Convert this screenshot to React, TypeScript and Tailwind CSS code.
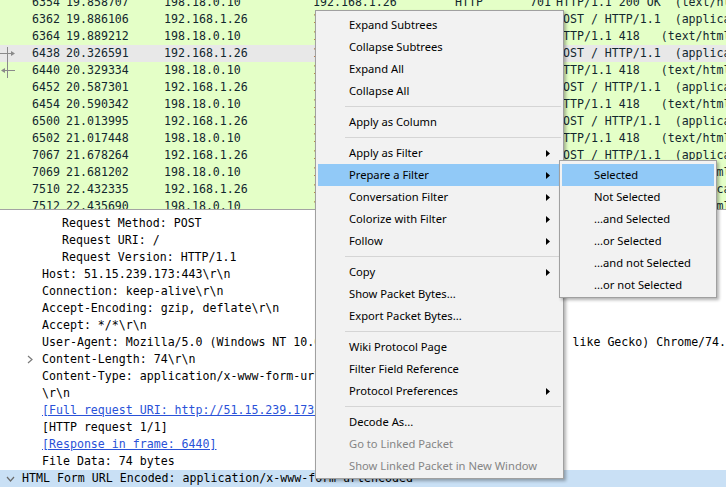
import React from "react";

const mono = { fontFamily: '"DejaVu Sans Mono", monospace' };
const ui = { fontFamily: '"Noto Sans", sans-serif' };

type Pkt = [string, string, string, string, string, string, string];

const packets: Pkt[] = [
  ["6354", "19.858707", "198.18.0.10", "192.168.1.26", "HTTP", "701", "HTTP/1.1 200 OK  (text/html)"],
  ["6362", "19.886106", "192.168.1.26", "198.18.0.10", "HTTP", "579", "POST / HTTP/1.1  (application/x-www-form-urlencoded)"],
  ["6364", "19.889212", "198.18.0.10", "192.168.1.26", "HTTP", "418", "HTTP/1.1 418   (text/html)"],
  ["6438", "20.326591", "192.168.1.26", "198.18.0.10", "HTTP", "579", "POST / HTTP/1.1  (application/x-www-form-urlencoded)"],
  ["6440", "20.329334", "198.18.0.10", "192.168.1.26", "HTTP", "418", "HTTP/1.1 418   (text/html)"],
  ["6452", "20.587301", "192.168.1.26", "198.18.0.10", "HTTP", "579", "POST / HTTP/1.1  (application/x-www-form-urlencoded)"],
  ["6454", "20.590342", "198.18.0.10", "192.168.1.26", "HTTP", "418", "HTTP/1.1 418   (text/html)"],
  ["6500", "21.013995", "192.168.1.26", "198.18.0.10", "HTTP", "579", "POST / HTTP/1.1  (application/x-www-form-urlencoded)"],
  ["6502", "21.017448", "198.18.0.10", "192.168.1.26", "HTTP", "418", "HTTP/1.1 418   (text/html)"],
  ["7067", "21.678264", "192.168.1.26", "198.18.0.10", "HTTP", "579", "POST / HTTP/1.1  (application/x-www-form-urlencoded)"],
  ["7069", "21.681202", "198.18.0.10", "192.168.1.26", "HTTP", "418", "HTTP/1.1 418   (text/html)"],
  ["7510", "22.432335", "192.168.1.26", "198.18.0.10", "HTTP", "579", "POST / HTTP/1.1  (application/x-www-form-urlencoded)"],
  ["7512", "22.435690", "198.18.0.10", "192.168.1.26", "HTTP", "418", "HTTP/1.1 418   (text/html)"],
];

function Gutter({ kind }: { kind: "req" | "resp" | null }) {
  return (
    <div className="w-[16px] h-[17px] shrink-0">
      {kind === "req" && (
        <svg width="16" height="17" viewBox="0 0 16 17">
          <line x1="7.5" y1="2" x2="7.5" y2="17" stroke="#8a8a8a" strokeWidth="1" />
          <line x1="0" y1="8.5" x2="14" y2="8.5" stroke="#8a8a8a" strokeWidth="1" />
          <path d="M11 6 L15 8.5 L11 11 Z" fill="#8a8a8a" />
        </svg>
      )}
      {kind === "resp" && (
        <svg width="16" height="17" viewBox="0 0 16 17">
          <line x1="7.5" y1="0" x2="7.5" y2="16" stroke="#8a8a8a" strokeWidth="1" />
          <line x1="2" y1="8.5" x2="15" y2="8.5" stroke="#8a8a8a" strokeWidth="1" />
          <path d="M5 6 L1 8.5 L5 11 Z" fill="#8a8a8a" />
        </svg>
      )}
    </div>
  );
}

function PacketRow({ p, i }: { p: Pkt; i: number }) {
  const selected = i === 3;
  return (
    <div
      className={`flex h-[17px] leading-[17px] whitespace-pre text-[#12272e] ${selected ? "bg-[#e8e8e8]" : "bg-[#e4ffc7]"}`}
    >
      <Gutter kind={i === 3 ? "req" : i === 4 ? "resp" : null} />
      <div className="w-[44px] text-right shrink-0">{p[0]}</div>
      <div className="w-[104px] pl-[6px] shrink-0">{p[1]}</div>
      <div className="w-[149px] shrink-0">{p[2]}</div>
      <div className="w-[142px] shrink-0">{p[3]}</div>
      <div className="w-[45px] shrink-0">{p[4]}</div>
      <div className="w-[51px] text-right shrink-0">{p[5]}</div>
      <div className="flex-1 pl-[5px] overflow-hidden">{p[6]}</div>
    </div>
  );
}

type Detail = {
  level: number;
  text: string;
  link?: boolean;
  chevron?: "right" | "down";
  highlight?: boolean;
};

const details: Detail[] = [
  { level: 2, text: "Request Method: POST" },
  { level: 2, text: "Request URI: /" },
  { level: 2, text: "Request Version: HTTP/1.1" },
  { level: 1, text: "Host: 51.15.239.173:443\\r\\n" },
  { level: 1, text: "Connection: keep-alive\\r\\n" },
  { level: 1, text: "Accept-Encoding: gzip, deflate\\r\\n" },
  { level: 1, text: "Accept: */*\\r\\n" },
  {
    level: 1,
    text: "User-Agent: Mozilla/5.0 (Windows NT 10.0; WOW64) AppleWebKit/537.36 (KHTML, like Gecko) Chrome/74.0.3729.169 Safari/537.36\\r\\n",
  },
  { level: 1, text: "Content-Length: 74\\r\\n", chevron: "right" },
  { level: 1, text: "Content-Type: application/x-www-form-urlencoded\\r\\n" },
  { level: 1, text: "\\r\\n" },
  { level: 1, text: "[Full request URI: http://51.15.239.173:443/]", link: true },
  { level: 1, text: "[HTTP request 1/1]" },
  { level: 1, text: "[Response in frame: 6440]", link: true },
  { level: 1, text: "File Data: 74 bytes" },
  { level: 0, text: "HTML Form URL Encoded: application/x-www-form-urlencoded", chevron: "down", highlight: true },
];

function DetailRow({ d }: { d: Detail }) {
  const pad = d.level === 0 ? "pl-[2px]" : d.level === 1 ? "pl-[22px]" : "pl-[42px]";
  return (
    <div className={`flex h-[17px] leading-[17px] whitespace-pre ${pad} ${d.highlight ? "bg-[#c9e0f5]" : ""}`}>
      <div className="w-[20px] shrink-0 flex items-center pl-[4px]">
        {d.chevron === "right" && (
          <svg width="8" height="9" viewBox="0 0 8 9">
            <path d="M2 1 L6 4.5 L2 8" fill="none" stroke="#7a7a7a" strokeWidth="1.2" />
          </svg>
        )}
        {d.chevron === "down" && (
          <svg width="9" height="8" viewBox="0 0 9 8">
            <path d="M1 2 L4.5 6 L8 2" fill="none" stroke="#6a6a6a" strokeWidth="1.2" />
          </svg>
        )}
      </div>
      <div className={d.link ? "text-[#2a52d8] underline" : "text-black"}>{d.text}</div>
    </div>
  );
}

function Arrow() {
  return (
    <svg width="4" height="7" viewBox="0 0 4 7">
      <path d="M0 0 L4 3.5 L0 7 Z" fill="#000" />
    </svg>
  );
}

type MItem = { label?: string; sep?: boolean; sub?: boolean; hl?: boolean; disabled?: boolean };

const menuItems: MItem[] = [
  { label: "Expand Subtrees" },
  { label: "Collapse Subtrees" },
  { label: "Expand All" },
  { label: "Collapse All" },
  { sep: true },
  { label: "Apply as Column" },
  { sep: true },
  { label: "Apply as Filter", sub: true },
  { label: "Prepare a Filter", sub: true, hl: true },
  { label: "Conversation Filter", sub: true },
  { label: "Colorize with Filter", sub: true },
  { label: "Follow", sub: true },
  { sep: true },
  { label: "Copy", sub: true },
  { label: "Show Packet Bytes..." },
  { label: "Export Packet Bytes..." },
  { sep: true },
  { label: "Wiki Protocol Page" },
  { label: "Filter Field Reference" },
  { label: "Protocol Preferences", sub: true },
  { sep: true },
  { label: "Decode As..." },
  { label: "Go to Linked Packet", disabled: true },
  { label: "Show Linked Packet in New Window", disabled: true },
];

const subItems = ["Selected", "Not Selected", "...and Selected", "...or Selected", "...and not Selected", "...or not Selected"];

export default function App() {
  return (
    <div className="relative w-[726px] h-[488px] overflow-hidden bg-white text-[11.6px]" style={mono}>
      {/* packet list */}
      <div className="h-[210px] overflow-hidden bg-[#e4ffc7] border-b border-[#a3a3a3]">
        <div className="-mt-[6px]">
          {packets.map((p, i) => (
            <PacketRow key={p[0]} p={p} i={i} />
          ))}
        </div>
      </div>
      {/* packet details */}
      <div className="pt-[5px] bg-white">
        {details.map((d, i) => (
          <DetailRow key={i} d={d} />
        ))}
      </div>

      {/* context menu */}
      <div
        className="absolute left-[315px] top-[10px] w-[249px] bg-[#f2f2f2] border border-[#a0a0a0] pt-[3px] pb-[1px] px-[2px] shadow-[2px_2px_3px_rgba(0,0,0,0.3)] text-[11.2px] text-black whitespace-nowrap"
        style={ui}
      >
        {menuItems.map((m, i) =>
          m.sep ? (
            <div key={i} className="h-[9px] flex items-center pl-[27px]">
              <div className="w-full h-px bg-[#d5d5d5]" />
            </div>
          ) : (
            <div
              key={i}
              className={`h-[22px] flex items-center justify-between pl-[31px] pr-[11px] ${m.hl ? "bg-[#91c9f7]" : ""} ${m.disabled ? "text-[#858585]" : ""}`}
            >
              <span>{m.label}</span>
              {m.sub && <Arrow />}
            </div>
          )
        )}
      </div>

      {/* submenu */}
      <div
        className="absolute left-[559px] top-[160px] w-[158px] bg-[#f2f2f2] border border-[#a0a0a0] pt-[3px] pb-[1px] px-[2px] shadow-[2px_2px_3px_rgba(0,0,0,0.3)] text-[11.2px] text-black whitespace-nowrap"
        style={ui}
      >
        {subItems.map((s, i) => (
          <div key={s} className={`h-[22px] flex items-center pl-[32px] ${i === 0 ? "bg-[#91c9f7]" : ""}`}>
            {s}
          </div>
        ))}
      </div>
    </div>
  );
}
